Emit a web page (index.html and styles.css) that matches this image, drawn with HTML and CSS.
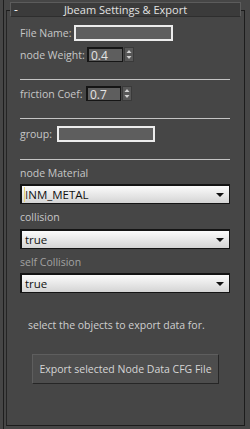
FILE: index.html
```html
<!DOCTYPE html>
<html>
<head>
<meta charset="utf-8">
<link rel="stylesheet" href="styles.css">
</head>
<body>
<div class="rollout">
  <div class="frame">
    <div class="title">
      <span class="minus">-</span>
      <span class="title-text">Jbeam Settings &amp; Export</span>
    </div>
    <div class="content">
      <div class="row r1">
        <span class="lbl w-file">File Name:</span>
        <div class="textbox tb-file"></div>
      </div>
      <div class="row r2">
        <span class="lbl w-weight">node Weight:</span>
        <div class="spin s-weight"><span class="val">0.4</span></div>
        <div class="arrows">
          <svg width="8" height="13" viewBox="0 0 8 13"><path d="M1.5 5 L4 2 L6.5 5 Z" fill="#d0d0d0"/><path d="M1.5 8 L4 11 L6.5 8 Z" fill="#d0d0d0"/></svg>
        </div>
      </div>
      <div class="sep s1"></div>
      <div class="row r3">
        <span class="lbl w-fric">friction Coef:</span>
        <div class="spin s-friction"><span class="val">0.7</span></div>
        <div class="arrows">
          <svg width="8" height="13" viewBox="0 0 8 13"><path d="M1.5 5 L4 2 L6.5 5 Z" fill="#d0d0d0"/><path d="M1.5 8 L4 11 L6.5 8 Z" fill="#d0d0d0"/></svg>
        </div>
      </div>
      <div class="sep s2"></div>
      <div class="row r4">
        <span class="lbl w-group">group:</span>
        <div class="textbox tb-group"></div>
      </div>
      <div class="sep s3"></div>
      <div class="label l-mat">node Material</div>
      <div class="dropdown d1"><span class="dd-text"><span class="caret">I</span>NM_METAL</span><span class="tri"></span></div>
      <div class="label l-col">collision</div>
      <div class="dropdown d2"><span class="dd-text">true</span><span class="tri"></span></div>
      <div class="label l-self dim">self Collision</div>
      <div class="dropdown d3"><span class="dd-text">true</span><span class="tri"></span></div>
      <div class="hint">select the objects to export data for.</div>
      <div class="btn">Export selected Node Data CFG File</div>
    </div>
  </div>
</div>
</body>
</html>
```
FILE: styles.css
```css
* { box-sizing: border-box; }
html, body {
  margin: 0;
  padding: 0;
  width: 250px;
  height: 429px;
  overflow: hidden;
  background: #464646;
  font-family: "Open Sans", "Liberation Sans", Arial, sans-serif;
  font-size: 10.5px;
  color: #c6c6c6;
}
.rollout {
  margin-left: 3px;
  height: 429px;
  border-left: 1px solid #1e1e1e;
  padding-top: 10px;
}
.frame {
  margin-left: 2px;
  width: 239px;
  height: 416px;
  border: 1px solid #1c1c1c;
  border-left-color: #252525;
}
.title {
  margin-top: -9px;
  margin-left: 3px;
  width: 231px;
  height: 15px;
  background: #3b3b3b;
  border: 1px solid #5c5c5c;
  border-bottom-color: #2e2e2e;
  display: flex;
  align-items: center;
  color: #e2e2e2;
}
.minus {
  width: 14px;
  padding-left: 3px;
  font-size: 12px;
  line-height: 13px;
  color: #eee;
}
.title-text {
  flex: 1;
  text-align: center;
  padding-right: 14px;
  line-height: 13px;
  font-size: 11px;
}
.content {
  padding-left: 13px;
  display: flex;
  flex-direction: column;
}
.row {
  display: flex;
  align-items: center;
}
.lbl { white-space: nowrap; }
.w-file { width: 54px; }
.w-weight { width: 67px; }
.w-fric { width: 66px; }
.w-group { width: 37px; }
.r1 { margin-top: 8px; height: 16px; }
.r2 { margin-top: 6px; height: 15px; }
.r3 { margin-top: 6px; height: 15px; }
.r4 { margin-top: 7px; height: 16px; }
.textbox {
  height: 16px;
  background: #5e5e5e;
  border: 2px solid #ececec;
}
.tb-file { width: 99px; }
.tb-group { width: 98px; }
.spin {
  height: 15px;
  background: #5e5e5e;
  border: 1px solid #151515;
  border-top-width: 2px;
  border-left-width: 2px;
  display: flex;
  align-items: center;
  padding-left: 2px;
  color: #e4e4e4;
  font-size: 12px;
}
.s-weight { width: 36px; }
.s-friction { width: 35px; }
.arrows {
  width: 10px;
  height: 15px;
  margin-left: 1px;
  background: #575757;
  border: 1px solid #3a3a3a;
  display: flex;
  justify-content: center;
}
.arrows svg { display: block; }
.sep {
  width: 210px;
  height: 1px;
  background: #c4c4c4;
}
.s1 { margin-top: 17px; }
.s2 { margin-top: 17px; }
.s3 { margin-top: 17px; }
.label {
  height: 14px;
  line-height: 14px;
  white-space: nowrap;
}
.dim { color: #a2a2a2; }
.l-mat { margin-top: 6px; }
.l-col { margin-top: 6px; }
.l-self { margin-top: 6px; }
.dropdown {
  width: 210px;
  height: 20px;
  border: 1px solid #141414;
  border-top-width: 2px;
  border-left-width: 2px;
  background: linear-gradient(#fbfbfb, #e4e4e4 60%, #d4d4d4);
  display: flex;
  align-items: center;
  padding-left: 3px;
  padding-right: 5px;
  color: #111;
  font-size: 11.5px;
}
.d1 { margin-top: 4px; }
.d2 { margin-top: 5px; }
.d3 { margin-top: 4px; }
.dd-text { flex: 1; }
.caret {
  color: #333;
  box-shadow: -1px 0 0 #e6d37a;
}
.tri {
  width: 0;
  height: 0;
  border-left: 4px solid transparent;
  border-right: 4px solid transparent;
  border-top: 4px solid #111;
}
.hint {
  margin-top: 25px;
  margin-left: 8px;
  height: 14px;
  line-height: 14px;
  white-space: nowrap;
  color: #cfcfcf;
}
.btn {
  margin-top: 22px;
  margin-left: 12px;
  width: 187px;
  height: 30px;
  background: #4d4d4d;
  border: 1px solid #262626;
  border-top-color: #5e5e5e;
  border-left-color: #5e5e5e;
  display: flex;
  align-items: center;
  justify-content: center;
  color: #d6d6d6;
  white-space: nowrap;
}
```
